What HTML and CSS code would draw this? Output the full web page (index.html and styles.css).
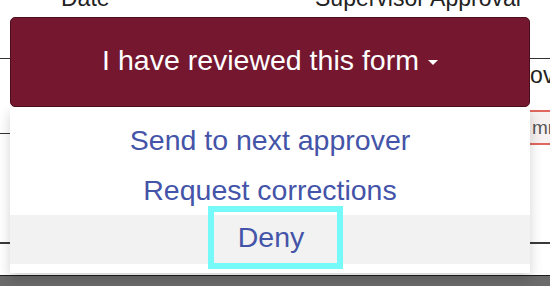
FILE: index.html
```html
<!DOCTYPE html>
<html lang="en">
<head>
<meta charset="utf-8">
<title>Review form</title>
<link rel="stylesheet" href="styles.css">
</head>
<body>
<div class="page">
  <div class="sheet">
    <div class="row row-head">
      <div class="th th-date">Date</div>
      <div class="th th-approval">Supervisor Approval</div>
    </div>
    <div class="row row-entry">
      <span class="status">Approved</span>
      <div class="date-input">mm/dd/yyyy</div>
    </div>
    <div class="row row-empty"></div>
    <div class="footer-bar"></div>
  </div>

  <div class="dropdown">
    <button class="review-btn" type="button">
      <span class="label">I have reviewed this form<span class="caret"></span></span>
    </button>
    <ul class="menu">
      <li class="item"><a href="#">Send to next approver</a></li>
      <li class="item"><a href="#">Request corrections</a></li>
      <li class="item item-active"><a href="#" class="focused">Deny</a></li>
    </ul>
  </div>
</div>
</body>
</html>
```

FILE: styles.css
```css
html, body {
  margin: 0;
  padding: 0;
  background: #ffffff;
}

body {
  font-family: "Liberation Sans", Arial, sans-serif;
  color: #222222;
}

.page {
  position: relative;
  width: 550px;
  height: 286px;
  overflow: hidden;
}

.sheet {
  display: flex;
  flex-direction: column;
  height: 286px;
}

.row {
  flex: none;
}

.row-head {
  margin-top: -15px;
  height: 73px;
  border-bottom: 1px solid #333333;
  display: grid;
  grid-template-columns: 254px 1fr;
  font-size: 23px;
  line-height: 26px;
  white-space: nowrap;
}

.th {
  padding-left: 61px;
}

.row-entry {
  height: 71px;
  padding-top: 3px;
  border-bottom: 1px solid #333333;
  display: flex;
  flex-direction: column;
  align-items: flex-end;
  font-size: 23px;
  line-height: 26px;
  white-space: nowrap;
}

.status {
  margin-right: -30px;
}

.date-input {
  margin-top: 22px;
  margin-right: -130px;
  width: 146px;
  height: 31px;
  border: 2px solid #e0665e;
  background: #f8f1f1;
  color: #555555;
  font-size: 19px;
  line-height: 31px;
  padding-left: 3px;
  position: relative;
  z-index: 1;
}

.row-empty {
  height: 108px;
  border-bottom: 2px solid #3a3a3a;
}

.footer-bar {
  margin-top: auto;
  height: 10px;
  border-top: 1px solid #1c1c1c;
  background: #6b6b6b;
}

.dropdown {
  position: absolute;
  top: 17px;
  left: 10px;
  width: 520px;
  z-index: 5;
}

.review-btn {
  position: relative;
  z-index: 2;
  display: flex;
  align-items: center;
  justify-content: center;
  box-sizing: border-box;
  width: 520px;
  height: 90px;
  margin: 0;
  padding: 0 0 3px 0;
  border: 1px solid #4c0e1f;
  border-radius: 5px;
  background: #74172f;
  color: #ffffff;
  font-family: "Liberation Sans", Arial, sans-serif;
  font-size: 28.5px;
  cursor: pointer;
}

.label {
  white-space: nowrap;
}

.caret {
  display: inline-block;
  width: 0;
  height: 0;
  margin-left: 9px;
  vertical-align: middle;
  border-top: 5px solid #ffffff;
  border-left: 5.5px solid transparent;
  border-right: 5.5px solid transparent;
}

.menu {
  list-style: none;
  margin: 0;
  padding: 8px 0 9px 0;
  background: #ffffff;
  box-shadow: 0 6px 12px rgba(0, 0, 0, 0.175);
  font-size: 28.5px;
  text-align: center;
}

.item {
  height: 50px;
  line-height: 50px;
}

.item a {
  color: #4454a8;
  text-decoration: none;
  white-space: nowrap;
}

.item-active {
  height: 49px;
  background: #f2f2f2;
  display: flex;
  justify-content: center;
  align-items: flex-start;
}

.item-active .focused {
  display: inline-block;
  height: 51px;
  line-height: 51px;
  margin-top: -3px;
  margin-left: 11px;
  padding: 0 33px 0 24px;
  outline: 6px solid #76f9f9;
}
```
